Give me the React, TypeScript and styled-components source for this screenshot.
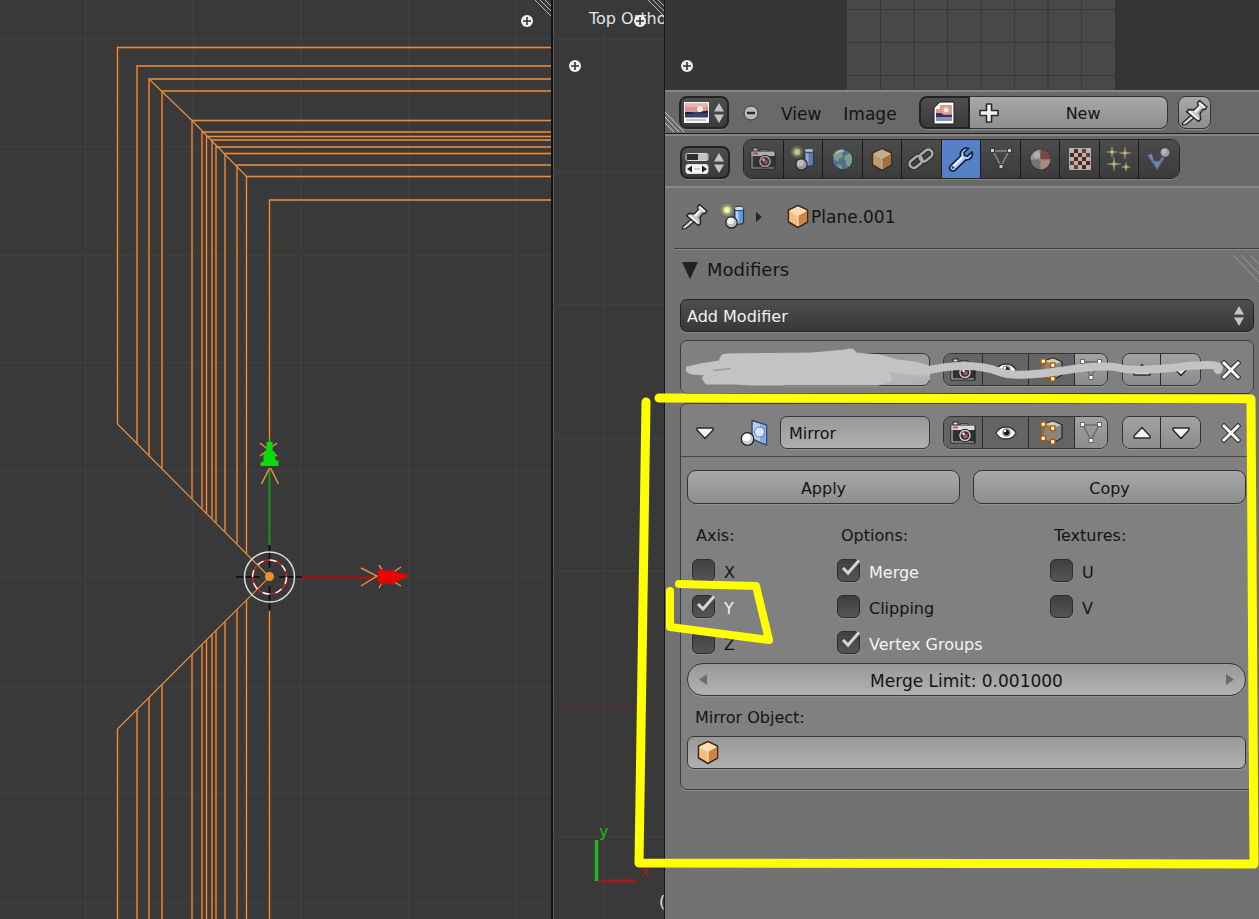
import React, { useId, useState } from 'react';
import styled, { createGlobalStyle, css } from 'styled-components';

const GlobalStyle = createGlobalStyle`
  *, *::before, *::after { box-sizing: border-box; }
  body {
    margin: 0;
    background: #727272;
    font-family: "DejaVu Sans", sans-serif;
    font-size: 16px;
    line-height: 20px;
    color: #141414;
    overflow-x: hidden;
  }
  button, input, select { font: inherit; color: inherit; margin: 0; }
  svg { display: block; flex: none; }
`;

/* ---------- layout ---------- */

const Workspace = styled.main`
  display: grid;
  grid-template-columns: minmax(0, 551fr) minmax(0, 113fr) minmax(0, 595fr);
  min-height: 100vh;
`;

const Viewport = styled.section<{ $divided?: boolean }>`
  position: relative;
  overflow: hidden;
  background: #393939;
  ${(p) => p.$divided && css`
    border-left: 2px solid #121212;
    box-shadow: inset 1px 0 #5a5a5a;
  `}
`;

const Canvas = styled.svg`
  position: absolute;
  inset: 0;
  width: 100%;
  height: 100%;
`;

const ViewName = styled.h2`
  margin: 0;
  padding: 9px 0 0 36px;
  font-size: 16px;
  font-weight: 400;
  color: #e4e4e4;
  white-space: nowrap;
`;

const Sidebar = styled.section`
  position: relative;
  display: flex;
  flex-direction: column;
  background: #727272;
  border-left: 1px solid #161616;
`;

const Annotations = styled.svg`
  position: absolute;
  top: 0;
  left: 0;
  width: 100%;
  height: 100%;
  overflow: visible;
  pointer-events: none;
`;

const ImageView = styled.div`
  position: relative;
  height: 90px;
  overflow: hidden;
  background: #353535;
`;

const Bar = styled.header<{ $tall?: boolean }>`
  position: relative;
  display: flex;
  align-items: ${(p) => (p.$tall ? 'flex-end' : 'center')};
  height: ${(p) => (p.$tall ? 54 : 44)}px;
  padding: ${(p) => (p.$tall ? '0 0 7px 15px' : '0 0 0 14px')};
  background: #696969;
  border-top: 2px solid #878787;
  border-bottom: ${(p) => (p.$tall ? '2px solid #8a8a8a' : '1px solid #1c1c1c')};
`;

const Menus = styled.nav`
  display: flex;
  align-items: center;
  gap: 22px;
  margin: 0 22px 0 14px;
`;

const MenuButton = styled.button`
  padding: 2px 0 0;
  border: 0;
  background: none;
  font-size: 17px;
`;

const DarkButton = styled.button<{ $join?: boolean }>`
  display: flex;
  align-items: center;
  justify-content: center;
  gap: 4px;
  width: ${(p) => (p.$join ? 51 : 50)}px;
  height: 33px;
  padding: 0;
  border: 2px solid #232323;
  border-radius: ${(p) => (p.$join ? '8px 0 0 8px' : '8px')};
  background: linear-gradient(#4e4e4e, #3a3a3a);
  box-shadow: 0 1px #848484;
`;

const PlainButton = styled.button`
  padding: 0;
  border: 0;
  background: none;
`;

const lightFace = css`
  border: 1px solid #333;
  background: linear-gradient(#a8a8a8, #8e8e8e);
  box-shadow: 0 1px #919191;
`;

const NewButton = styled.button`
  ${lightFace}
  display: flex;
  align-items: center;
  width: 198px;
  height: 33px;
  padding: 0 0 0 8px;
  border-left: 0;
  border-radius: 0 8px 8px 0;
  span { flex: 1; padding-top: 2px; }
`;

const PinButton = styled.button`
  ${lightFace}
  display: flex;
  align-items: center;
  justify-content: center;
  width: 33px;
  height: 33px;
  margin-left: 10px;
  padding: 0;
  border-radius: 8px;
`;

const Tabs = styled.div`
  display: grid;
  grid-template-columns: repeat(11, minmax(0, 1fr));
  width: 437px;
  height: 40px;
  margin-left: 13px;
  border: 1px solid #222;
  border-radius: 9px;
  overflow: hidden;
  box-shadow: 0 1px #848484;
`;

const Tab = styled.button<{ $active?: boolean }>`
  display: flex;
  align-items: center;
  justify-content: center;
  padding: 0;
  border: 0;
  border-right: 1px solid #1b1b1b;
  background: ${(p) => (p.$active ? '#5680c8' : 'linear-gradient(#4c4c4c, #3b3b3b)')};
  &:last-child { border-right: 0; }
  svg { opacity: ${(p) => (p.$active ? 1 : 0.7)}; }
`;

const Breadcrumbs = styled.div`
  display: flex;
  align-items: center;
  height: 60px;
  padding: 0 0 3px 16px;
  font-size: 17px;
`;

const Path = styled.div`
  display: flex;
  align-items: center;
  margin-left: 12px;
  gap: 10px;
`;

const ObjectName = styled.span`
  display: flex;
  align-items: center;
  gap: 2px;
  margin-left: 15px;
`;

const Panel = styled.section`
  position: relative;
  margin-left: 9px;
  padding: 10px 5px 0 6px;
  border-top: 1px solid #3e3e3e;
  box-shadow: inset 0 1px #8c8c8c;
`;

const PanelTitle = styled.h2`
  display: flex;
  align-items: center;
  gap: 9px;
  margin: 0 0 18px 2px;
  font-size: 18px;
  line-height: 22px;
  font-weight: 400;
`;

const Picker = styled.div`
  position: relative;
  margin-bottom: 8px;
`;

const PickerArrows = styled.span`
  position: absolute;
  right: 9px;
  top: 6px;
  pointer-events: none;
`;

const Select = styled.select`
  appearance: none;
  display: block;
  width: 100%;
  height: 33px;
  padding: 2px 30px 0 6px;
  border: 1px solid #222;
  border-radius: 7px;
  background: linear-gradient(#4e4e4e, #383838);
  box-shadow: 0 1px #8a8a8a;
  color: #f2f2f2;
`;

const Card = styled.article`
  margin-bottom: 9px;
  border: 1px solid #3c3c3c;
  border-radius: 7px;
  background: #808080;
  box-shadow: 0 1px #8e8e8e;
`;

const CardHeader = styled.div`
  display: flex;
  align-items: center;
  height: 52px;
  padding: 5px 12px 0 14px;
`;

const ToggleArrow = styled(PlainButton)`
  width: 20px;
  margin-right: 25px;
`;

const fieldFace = css`
  width: 100%;
  height: 33px;
  border: 1px solid #363636;
  border-radius: 7px;
  background: linear-gradient(#989898, #b0b0b0);
  box-shadow: 0 1px #929292;
`;

const NameInput = styled.input`
  ${fieldFace}
  flex: 1;
  min-width: 0;
  margin: 0 13px 0 12px;
  padding: 2px 8px 0;
`;

const Group = styled.div`
  display: flex;
  height: 33px;
  margin-right: 14px;
  border: 1px solid #333;
  border-radius: 8px;
  overflow: hidden;
  box-shadow: 0 1px #949494;
`;

const GroupButton = styled.button<{ $w: number; $on?: boolean }>`
  display: flex;
  align-items: center;
  justify-content: center;
  width: ${(p) => p.$w}px;
  padding: 0;
  border: 0;
  border-right: 1px solid #2b2b2b;
  background: ${(p) => (p.$on ? '#646464' : 'linear-gradient(#a2a2a2, #8c8c8c)')};
  &:last-child { border-right: 0; }
`;

const CloseButton = styled(PlainButton)`
  margin-left: 6px;
`;

const CardBody = styled.div`
  padding: 13px 7px 20px 6px;
  border-top: 1px solid #484848;
`;

const Actions = styled.div`
  display: grid;
  grid-template-columns: 1fr 1fr;
  gap: 13px;
  margin-bottom: 22px;
`;

const ActionButton = styled.button`
  ${lightFace}
  height: 34px;
  padding: 3px 0 0;
  border-radius: 9px;
`;

const Settings = styled.div`
  display: grid;
  grid-template-columns: 145fr 213fr 196fr;
  padding-left: 5px;
`;

const SettingGroup = styled.fieldset`
  display: flex;
  flex-direction: column;
  gap: 13px;
  min-width: 0;
  margin: 0 0 9px;
  padding: 0;
  border: 0;
`;

const Legend = styled.legend`
  margin-bottom: 13px;
  padding: 0 0 0 4px;
`;

const CheckLabel = styled.label<{ $on: boolean }>`
  position: relative;
  display: flex;
  align-items: center;
  gap: 9px;
  height: 23px;
  color: ${(p) => (p.$on ? '#f4f4f4' : '#141414')};
  span { padding-top: 4px; }
`;

const CheckBox = styled.input`
  appearance: none;
  width: 23px;
  height: 23px;
  border: 1px solid #2c2c2c;
  border-radius: 6px;
  background: linear-gradient(#3f3f3f, #555);
  box-shadow: 0 1px #909090;
`;

const Tick = styled.svg`
  position: absolute;
  left: 0;
  top: 0;
  pointer-events: none;
`;

const NumberField = styled.div`
  position: relative;
  margin-bottom: 12px;
`;

const NumberInput = styled.input`
  ${fieldFace}
  display: block;
  padding: 2px 24px 0;
  border-radius: 16px;
  background: linear-gradient(#999, #b2b2b2);
  font-size: 17px;
  text-align: center;
`;

const StepArrow = styled.svg<{ $side: 'left' | 'right' }>`
  position: absolute;
  top: 11px;
  ${(p) => p.$side}: 12px;
`;

const FieldLabel = styled.label`
  display: block;
  margin: 0 0 8px 8px;
`;

const ObjectField = styled.div`
  position: relative;
  & > svg { position: absolute; left: 10px; top: 4px; }
`;

const ObjectInput = styled.input`
  ${fieldFace}
  display: block;
  padding: 0 8px 0 38px;
`;

const Corner = styled.svg`
  position: absolute;
`;

const LeftCorner = styled(Corner)`
  left: 0;
  bottom: 0;
`;

const RightCorner = styled(Corner)`
  right: 0;
  top: 5px;
`;

/* ---------- icons ---------- */

const UpDown = () => (
  <svg width="12" height="22" viewBox="0 0 12 22">
    <path d="M6 1 11 9.500H1zM6 21 1 12.500h10z" fill="#c4c4c4" />
  </svg>
);

const PictureIcon = () => (
  <svg width="25" height="21" viewBox="0 0 25 21">
    <path d="M0 0h25v21H0z" fill="#f5f5f5" />
    <path d="M1 1.500h23V10H1z" fill="#d99a94" />
    <path d="M1 1.500h23V5H1z" fill="#e8b4aa" />
    <circle cx="16" cy="7" r="3" fill="#fff0e4" />
    <path d="M1 10h23v5.500H1z" fill="#3c3f66" />
    <path d="M1 10h6l4 2H1zM18 9.500l6-1V11h-8z" fill="#22223c" />
    <path d="M2 18h20" stroke="#999" strokeWidth="1" />
  </svg>
);

const PageIcon = () => (
  <svg width="22" height="24" viewBox="0 0 22 24">
    <path d="M7 1h14v22H1V7z" fill="#fff" stroke="#1a1a1a" />
    <path d="M7 4h12v9H3V8h4z" fill="#dc9b93" />
    <circle cx="13" cy="9" r="2.500" fill="#fbe5da" />
    <path d="M3 13h16v7H3z" fill="#8c8fc0" />
    <path d="M3 12h5l3 2h8v2H3z" fill="#33365c" />
    <path d="M1.500 7H7V1.500z" fill="#fff" />
  </svg>
);

const PropertiesIcon = () => (
  <svg width="24" height="22" viewBox="0 0 24 22">
    <rect x="1" y="1.500" width="22" height="7" rx="1.500" fill="#2e2e2e" stroke="#ddd" />
    <path d="M13 2h8.500a1 1 0 0 1 1 1v4a1 1 0 0 1-1 1H13z" fill="#c4c4c4" />
    <rect x="1" y="12.500" width="22" height="9" rx="2" fill="#f4f4f4" stroke="#ddd" />
    <path d="M2 17l5-3.500v7zM22 17l-5-3.500v7z" fill="#222" />
    <path d="M9 17h6" stroke="#aaa" strokeWidth="1" />
  </svg>
);

const MinusDisc = () => (
  <svg width="16" height="16" viewBox="0 0 16 16">
    <circle cx="8" cy="8" r="7" fill="#b9b9b9" stroke="#3c3c3c" />
    <path d="M4 8h8" stroke="#2a2a2a" strokeWidth="2.400" />
  </svg>
);

const PlusIcon = () => (
  <svg width="22" height="22" viewBox="0 0 22 22">
    <path d="M8.500 2h5v6.500H20v5h-6.500V20h-5v-6.500H2v-5h6.500z" fill="#f2f2f2" stroke="#2b2b2b" strokeWidth="1.600" strokeLinejoin="round" />
  </svg>
);

const PinIcon = () => (
  <svg width="27" height="27" viewBox="0 0 27 27">
    <path d="M11.500 15 1.500 24v2l3.500-.500 9-7.500z" fill="#d8d8d8" stroke="#222" strokeWidth="1.200" strokeLinejoin="round" />
    <path d="M18.500 1.500l7.500 6.500-2 2.500-2-.300-3 4.300.700 6-2.200 2L5.500 12.700l2.100-2.200 5.700.200 4-3.800-.900-3z" fill="#c6c6c6" stroke="#222" strokeWidth="1.400" strokeLinejoin="round" />
    <path d="M18.500 4l5 4.500M8.500 12.500l8.500 7.500" fill="none" stroke="#f2f2f2" strokeWidth="1.800" />
    <path d="M19 7.500l-5 5.500" stroke="#fff" strokeWidth="2" />
    <path d="M21 10l-4 5" stroke="#8b8b8b" strokeWidth="1.200" />
  </svg>
);

const SceneIcon = () => (
  <svg width="26" height="26" viewBox="0 0 26 26">
    <circle cx="7" cy="6" r="6" fill="#d8d860" opacity=".35" />
    <circle cx="7" cy="6" r="3.500" fill="#e6e68a" />
    <circle cx="7" cy="6" r="1.600" fill="#fffff0" />
    <path d="M14.500 5v13c0 3 9 3 9 0V5z" fill="#6c9ade" stroke="#26364e" strokeWidth="1.200" />
    <path d="M16 6v13l2.500.500V6z" fill="#b6d2f8" />
    <ellipse cx="19" cy="4.500" rx="4.500" ry="2.300" fill="#c6dbf6" stroke="#26364e" />
    <circle cx="11.500" cy="18.500" r="5.700" fill="#bdbdbd" stroke="#222" strokeWidth="1.200" />
    <circle cx="10.500" cy="17" r="3.300" fill="#f2f2f2" />
  </svg>
);

const CubeIcon = () => (
  <svg width="22" height="25" viewBox="0 0 22 25">
    <path d="M11 1.500 20.500 6v12L11 23.500 1.500 18V6z" fill="#e8ad6c" stroke="#3b2a1a" strokeWidth="1.500" strokeLinejoin="round" />
    <path d="M11 2.500 19.500 6.500 11 11 2.500 6.500z" fill="#fbdcae" />
    <path d="M2.500 7 11 11.300V22l-8.500-5z" fill="#f3be82" />
    <path d="M19.500 7 11 11.300V22l8.500-5z" fill="#cd8440" />
    <path d="M3 7l8 4.300L19 7M11 11.300V22" stroke="#ffedd0" fill="none" />
  </svg>
);

const CameraIcon = () => (
  <svg width="26" height="24" viewBox="0 0 26 24">
    <path d="M3 1h5v3H3zM10 3h8v3h-8z" fill="#ddd" stroke="#222" />
    <path d="M1 4.500h24V22H1z" fill="#303030" stroke="#181818" />
    <path d="M1.500 4.500h23V9h-23z" fill="#dcdcdc" />
    <path d="M3 5.500h5v2H3z" fill="#c35d55" />
    <path d="M2 4.500V21h22" stroke="#bdbdbd" fill="none" strokeWidth="1.200" />
    <circle cx="15" cy="14.500" r="6.300" fill="#c4c4c4" stroke="#222" />
    <circle cx="15" cy="14.500" r="4.300" fill="#4e2a2e" />
    <circle cx="15.500" cy="15" r="2.300" fill="#93646a" />
    <circle cx="13.500" cy="12.800" r="1.200" fill="#fff" />
  </svg>
);

const WorldIcon = () => (
  <svg width="23" height="23" viewBox="0 0 23 23">
    <circle cx="11.500" cy="11.500" r="10.300" fill="#4f83b4" stroke="#27323c" />
    <path d="M4 4c3-3 7-3.500 9-2l-2 4 1 3-4 2-1 3-4-3-1-4zM14 8l5-3 2 4 0 5-3 5-3-2 0-4-2-2zM6 16l4 1 2 4-4-1z" fill="#9fc0a6" />
    <path d="M5 6a8 8 0 0 1 8-3" stroke="#dbeaf4" fill="none" strokeWidth="1.500" />
  </svg>
);

const ChainIcon = () => (
  <svg width="26" height="22" viewBox="0 0 26 22">
    {[['#222', 5], ['#d4d4d4', 2.6]].map(([c, w]) => (
      <g key={c} fill="none" stroke={c} strokeWidth={w}>
        <rect x="1" y="10" width="14" height="8" rx="4" transform="rotate(-40 8 14)" />
        <rect x="11" y="3.500" width="14" height="8" rx="4" transform="rotate(-40 18 7.500)" />
      </g>
    ))}
  </svg>
);

const WrenchIcon = () => (
  <svg width="27" height="27" viewBox="0 0 27 27">
    <path
      d="M21.500 2.300 17 6.500l.500 3 3 .700 4.500-4.300c1.500 4-1.500 8.500-6.500 8.300L8 24.300c-3 2.500-7-1.300-4.500-4.500L13.500 10C12.500 5 17 .500 21.500 2.300z"
      fill="#aecbf4" stroke="#14233c" strokeWidth="1.700" strokeLinejoin="round"
    />
    <path d="M6 20.500 15.500 11" stroke="#f4f9ff" strokeWidth="2" />
    <circle cx="6" cy="21.500" r="1.200" fill="#27426e" />
  </svg>
);

const MeshIcon = ({ light }: { light?: boolean }) => (
  <svg width="24" height="24" viewBox="0 0 24 24">
    <path d="M4 4h16l-8 15z" fill="none" stroke={light ? '#6b6b6b' : '#a8a8a8'} strokeWidth="1.500" />
    {[[1.500, 1.500], [18.500, 1.500], [10, 17.500]].map(([x, y]) => (
      <rect key={x} x={x} y={y} width="4" height="4" fill="#fff" stroke={light ? '#666' : '#333'} />
    ))}
  </svg>
);

const MaterialIcon = () => (
  <svg width="23" height="23" viewBox="0 0 23 23">
    <circle cx="11.500" cy="11.500" r="10.300" fill="#8b8b8b" stroke="#2c2c2c" />
    <path d="M11.500 1.500a10 10 0 0 0-10 10h10z" fill="#bcbcbc" />
    <path d="M11.500 1.500a10 10 0 0 1 10 10h-10z" fill="#8c4a40" />
    <path d="M11.500 11.500h10a10 10 0 0 1-10 10z" fill="#d5a79a" />
    <circle cx="8" cy="7" r="3" fill="#e6e6e6" opacity=".8" />
  </svg>
);

const CheckerIcon = () => (
  <svg width="22" height="22" viewBox="0 0 22 22">
    <path d="M.500.500h21v21H.500z" fill="#f0e0da" stroke="#ddd" />
    {Array.from({ length: 25 }, (_, i) => i).filter((i) => i % 2 === 1).map((i) => (
      <rect key={i} x={1 + (i % 5) * 4} y={1 + Math.floor(i / 5) * 4} width="4" height="4" fill={i % 3 ? '#5b1c18' : '#7c3a34'} />
    ))}
  </svg>
);

const SparkIcon = () => (
  <svg width="26" height="26" viewBox="0 0 26 26">
    {[[6, 6, 5.500], [19, 7, 6], [8, 18, 7], [20, 21, 4.500]].map(([x, y, r]) => (
      <path
        key={x}
        d={`M${x} ${y - r}l1 ${r - 1} ${r - 1} 1 ${1 - r} 1-1 ${r - 1}-1 ${1 - r} ${1 - r}-1 ${r - 1}-1z`}
        fill="#f2e8b4" stroke="#a79a58" strokeWidth=".600"
      />
    ))}
  </svg>
);

const PhysicsIcon = () => (
  <svg width="24" height="24" viewBox="0 0 24 24">
    <path d="M2 8l8 12L17 9" fill="none" stroke="#6a94cf" strokeWidth="3" />
    <path d="M1 8l4-1 1 5M10 21l-2-7 5 1z" fill="#87aadd" />
    <circle cx="18" cy="5.500" r="5" fill="#c4c4c4" stroke="#333" />
    <circle cx="17" cy="4.500" r="2.500" fill="#eee" />
  </svg>
);

const MirrorIcon = () => (
  <svg width="28" height="28" viewBox="0 0 28 28">
    <path d="M12 1.500 26.500 6v20L12 20z" fill="#b8cff2" stroke="#2d4b7c" strokeWidth="1.500" />
    <path d="M20 5v17l5 2.500V7z" fill="#83a8e2" />
    <circle cx="19.500" cy="13" r="5" fill="#d9e6fa" stroke="#5c80ba" />
    <circle cx="7.500" cy="20" r="6.300" fill="#d0d0d0" stroke="#222" strokeWidth="1.300" />
    <circle cx="6.500" cy="18.500" r="3.800" fill="#fff" />
  </svg>
);

const EyeIcon = () => (
  <svg width="22" height="16" viewBox="0 0 22 16">
    <path d="M1 8c4-8 16-8 20 0-4 8-16 8-20 0z" fill="#fff" stroke="#333" strokeWidth="1.300" />
    <circle cx="11.500" cy="7.500" r="4.300" fill="#8a8a8a" />
    <circle cx="11.500" cy="7.500" r="2.600" fill="#151515" />
    <circle cx="10" cy="6" r="1.200" fill="#fff" />
  </svg>
);

const EditCubeIcon = () => (
  <svg width="26" height="25" viewBox="0 0 26 25">
    <path d="M5 4 14 1l9 4v13l-9 5-10-5z" fill="#868686" stroke="#2c2c2c" strokeWidth="1.300" />
    <path d="M6 4l8-2.500L22 5l-8 3z" fill="#d8c8b2" />
    <path d="M4 4.500 14 8v14M4 4.500V18l10 4" fill="none" stroke="#c47a1c" strokeWidth="1.600" />
    {[[2, 2], [11.500, 6], [2, 16], [11.500, 19.500]].map(([x, y]) => (
      <rect key={`${x}-${y}`} x={x} y={y} width="4.500" height="4.500" fill="#fff" stroke="#a85c08" strokeWidth="1.400" />
    ))}
  </svg>
);

const Arrow = ({ up }: { up?: boolean }) => (
  <svg width="20" height="14" viewBox="0 0 20 14">
    <path d={up ? 'M10 1.500 18 10v2H2v-2z' : 'M10 12.500 2 4V2h16v2z'} fill="#f3f3f3" stroke="#2a2a2a" strokeWidth="1.500" strokeLinejoin="round" />
  </svg>
);

const CloseIcon = () => (
  <svg width="20" height="20" viewBox="0 0 20 20">
    <path d="M3 3l14 14M17 3L3 17" stroke="#303030" strokeWidth="5" strokeLinecap="square" />
    <path d="M3 3l14 14M17 3L3 17" stroke="#f6f6f6" strokeWidth="3" strokeLinecap="square" />
  </svg>
);

const PlusDisc = ({ x, y }: { x: number; y: number }) => (
  <g>
    <circle cx={x} cy={y} r="6" fill="#eee" />
    <path d={`M${x - 4} ${y}h8M${x} ${y - 4}v8`} stroke="#333" strokeWidth="1.600" />
  </g>
);

const Grip = ({ x, y }: { x: number; y: number }) => (
  <g stroke="#b8b8b8" strokeWidth="1">
    <path d={`M${x - 16} ${y}l16 16M${x - 11} ${y}l11 11M${x - 6} ${y}l6 6`} />
  </g>
);

/* ---------- viewport drawings ---------- */

const loops: [number, number][] = [
  [117.5, 47.5], [137, 66], [149, 79], [162, 91], [192, 120.5], [202, 132], [206.5, 136.5],
  [212, 140], [216, 147], [225, 153.5], [237, 165], [246.5, 176.5],
];

const loopPath = loops
  .map(([x, y]) => `M551 ${y}H${x}V${306.5 + x}M${x} ${846.5 - x}V2000`)
  .join('') + 'M551 200H269.500V440M269.500 611V2000';

const FrontView = () => (
  <Canvas aria-label="Wireframe of the mirrored plane">
    <defs>
      <pattern id="fine" x="85" y="39" width="10.8" height="10.8" patternUnits="userSpaceOnUse">
        <path d="M0 .500h10.800M.500 0v10.800" stroke="#3b3b3b" />
      </pattern>
      <pattern id="coarse" x="85" y="38.500" width="107.8" height="107.8" patternUnits="userSpaceOnUse">
        <path d="M0 .500h108M.500 0v108" stroke="#414141" />
      </pattern>
    </defs>
    <rect width="100%" height="100%" fill="url(#fine)" />
    <rect width="100%" height="100%" fill="url(#coarse)" />
    <path d="M0 253.500H2000" stroke="#662222" />
    <g fill="none">
      <path d={loopPath} stroke="#6b3410" strokeWidth="2.600" />
      <path d={loopPath} stroke="#dc9250" strokeWidth="1.300" />
      <path d="M149 79l43 41.500L246.500 176.500M117.500 424 269.500 577 117.500 729" stroke="#e09048" strokeWidth="1.200" />
    </g>
    <path d="M269.500 470v75" stroke="#12a012" strokeWidth="1.800" />
    <path d="M260 443l17 13M277 443l-17 13M269.500 468l-8 16M270.500 468l8 16" stroke="#e2924c" strokeWidth="1.500" />
    <path d="M269.500 437l1 5h2v8l3 3v7l3 1v5h-18v-3l3-2v-7l3-4v-8h2z" fill="#08dc08" />
    <path d="M302 577.500h75" stroke="#b40808" strokeWidth="2" />
    <path d="M361 568l16 8-16 10M379 565l7 11-7 12M401 567l-15 10 15 9" fill="none" stroke="#e2924c" strokeWidth="1.400" />
    <path d="M407 577l-6 3-4 1-4 4-6-2-5 2-4-3v-12l4-1 5 2 5-1 6 3 9 1z" fill="#e60404" />
    <path d="M236 577h24M279 577h23M269.500 545v23M269.500 586v24" stroke="#0a0a0a" strokeWidth="1.600" />
    <g fill="none">
      <circle cx="269.500" cy="577" r="25" stroke="#dcdcdc" strokeWidth="1.500" />
      <circle cx="269.500" cy="577" r="17" stroke="#d02020" strokeWidth="1.500" />
      <circle cx="269.500" cy="577" r="17" stroke="#f4f4f4" strokeWidth="1.500" strokeDasharray="7 6.300" />
    </g>
    <circle cx="269.500" cy="576.500" r="4.500" fill="#f09020" />
    <PlusDisc x={527} y={21} />
    <Grip x={551} y={0} />
  </Canvas>
);

const TopView = () => (
  <Canvas aria-label="Top view axes">
    <defs>
      <pattern id="topGrid" x="-82" y="38.500" width="133" height="133" patternUnits="userSpaceOnUse">
        <path d="M0 .500h133M.500 0v133" stroke="#424242" />
      </pattern>
    </defs>
    <rect y="30" width="100%" height="100%" fill="url(#topGrid)" />
    <path d="M1 704H400" stroke="#662222" />
    <PlusDisc x={87} y={21} />
    <PlusDisc x={22} y={66} />
    <Grip x={111} y={0} />
    <path d="M43.500 840v41" stroke="#22b422" strokeWidth="3.500" />
    <path d="M45 881h39" stroke="#8e2020" strokeWidth="3.500" />
    <text x="46" y="837" fontSize="16" fill="#22b422">y</text>
    <text x="87" y="877" fontSize="16" fill="#8e2020">x</text>
    <text x="106" y="907" fontSize="16" fill="#e4e4e4">(</text>
  </Canvas>
);

const UvView = () => (
  <Canvas aria-label="Image grid">
    <rect x="182" width="268" height="90" fill="#484848" />
    <path
      d="M215.500 0v90M249 0v90M282.500 0v90M316 0v90M349.500 0v90M383 0v90M416.500 0v90M182 9.500h268M182 42.500h268M182 75.500h268"
      stroke="#373737"
    />
    <PlusDisc x={22} y={66} />
  </Canvas>
);

const GripLines = ({ dim }: { dim?: boolean }) => (
  <g fill="none" stroke={dim ? '#999' : '#ccc'}>
    <path d={dim ? 'M2 1l26 27M10 1l18 19M19 1l9 9' : 'M0 1l19 20M0 6l14 15M0 12l9 9'} />
  </g>
);

/* ---------- controls ---------- */

const Check = ({ label, checked = false }: { label: string; checked?: boolean }) => {
  const [on, setOn] = useState(checked);
  return (
    <CheckLabel $on={on}>
      <CheckBox type="checkbox" checked={on} onChange={() => setOn(!on)} />
      {on && (
        <Tick width="25" height="23" viewBox="0 0 25 23">
          <path d="M6 9l5 5L22 1.500" fill="none" stroke="#d6d6d6" strokeWidth="3" />
        </Tick>
      )}
      <span>{label}</span>
    </CheckLabel>
  );
};

const ModifierHeader = ({ name }: { name: string }) => (
  <CardHeader>
    <ToggleArrow aria-label="Collapse modifier"><Arrow /></ToggleArrow>
    <MirrorIcon />
    <NameInput aria-label="Modifier name" defaultValue={name} />
    <Group>
      <GroupButton $w={39} $on aria-label="Use in render"><CameraIcon /></GroupButton>
      <GroupButton $w={46} $on aria-label="Show in viewport"><EyeIcon /></GroupButton>
      <GroupButton $w={46} $on aria-label="Show in edit mode"><EditCubeIcon /></GroupButton>
      <GroupButton $w={32} aria-label="Adjust edit cage"><MeshIcon light /></GroupButton>
    </Group>
    <Group>
      <GroupButton $w={38} aria-label="Move up"><Arrow up /></GroupButton>
      <GroupButton $w={39} aria-label="Move down"><Arrow /></GroupButton>
    </Group>
    <CloseButton aria-label="Remove modifier"><CloseIcon /></CloseButton>
  </CardHeader>
);

const tabs: [string, React.FC][] = [
  ['Render', CameraIcon], ['Scene', SceneIcon], ['World', WorldIcon], ['Object', CubeIcon],
  ['Constraints', ChainIcon], ['Modifiers', WrenchIcon], ['Data', MeshIcon], ['Material', MaterialIcon],
  ['Texture', CheckerIcon], ['Particles', SparkIcon], ['Physics', PhysicsIcon],
];

const scribbleOutline =
  'M687 367 700 364 719 361 722 355 727 354 812 353 845 350Q854 347 856 353L880 355 897 360 915 362 929 366V375L914 375 887 371 892 377 890 382 878 385H750L735 384H706L702 378 705 375 692 374Q684 372 687 367Z';

export default function App() {
  const objectId = useId();
  return (
    <>
      <GlobalStyle />
      <Workspace>
        <Viewport><FrontView /></Viewport>
        <Viewport $divided>
          <ViewName>Top Ortho</ViewName>
          <TopView />
        </Viewport>
        <Sidebar>
          <ImageView><UvView /></ImageView>
          <Bar>
            <LeftCorner width="20" height="22"><GripLines /></LeftCorner>
            <DarkButton aria-label="Editor type: image"><PictureIcon /><UpDown /></DarkButton>
            <Menus>
              <PlainButton aria-label="Collapse menus"><MinusDisc /></PlainButton>
              <MenuButton>View</MenuButton>
              <MenuButton>Image</MenuButton>
            </Menus>
            <DarkButton $join aria-label="Browse image"><PageIcon /></DarkButton>
            <NewButton><PlusIcon /><span>New</span></NewButton>
            <PinButton aria-label="Pin image"><PinIcon /></PinButton>
          </Bar>
          <Bar $tall>
            <DarkButton aria-label="Editor type: properties"><PropertiesIcon /><UpDown /></DarkButton>
            <Tabs>
              {tabs.map(([name, Icon]) => (
                <Tab key={name} aria-label={name} $active={name === 'Modifiers'}><Icon /></Tab>
              ))}
            </Tabs>
          </Bar>
          <Breadcrumbs>
            <PlainButton aria-label="Pin data"><PinIcon /></PlainButton>
            <Path>
              <SceneIcon />
              <svg width="6" height="10" viewBox="0 0 6 10"><path d="M0 0l6 5-6 5z" fill="#262626" /></svg>
              <ObjectName><CubeIcon />Plane.001</ObjectName>
            </Path>
          </Breadcrumbs>
          <Panel>
            <RightCorner width="28" height="28"><GripLines dim /></RightCorner>
            <PanelTitle>
              <svg width="16" height="17" viewBox="0 0 16 17"><path d="M0 0h16L8 17z" fill="#222" /></svg>
              Modifiers
            </PanelTitle>
            <Picker>
              <Select aria-label="Add Modifier" defaultValue="add">
                <option value="add">Add Modifier</option>
              </Select>
              <PickerArrows><UpDown /></PickerArrows>
            </Picker>
            <Card><ModifierHeader name="" /></Card>
            <Card>
              <ModifierHeader name="Mirror" />
              <CardBody>
                <Actions>
                  <ActionButton>Apply</ActionButton>
                  <ActionButton>Copy</ActionButton>
                </Actions>
                <Settings>
                  <SettingGroup>
                    <Legend>Axis:</Legend>
                    <Check label="X" />
                    <Check label="Y" checked />
                    <Check label="Z" />
                  </SettingGroup>
                  <SettingGroup>
                    <Legend>Options:</Legend>
                    <Check label="Merge" checked />
                    <Check label="Clipping" />
                    <Check label="Vertex Groups" checked />
                  </SettingGroup>
                  <SettingGroup>
                    <Legend>Textures:</Legend>
                    <Check label="U" />
                    <Check label="V" />
                  </SettingGroup>
                </Settings>
                <NumberField>
                  <NumberInput aria-label="Merge Limit" defaultValue="Merge Limit: 0.001000" />
                  <StepArrow $side="left" width="8" height="11"><path d="M8 0v11L0 5.500z" fill="#6c6c6c" /></StepArrow>
                  <StepArrow $side="right" width="8" height="11"><path d="M0 0v11l8-5.500z" fill="#6c6c6c" /></StepArrow>
                </NumberField>
                <FieldLabel htmlFor={objectId}>Mirror Object:</FieldLabel>
                <ObjectField>
                  <ObjectInput id={objectId} />
                  <CubeIcon />
                </ObjectField>
              </CardBody>
            </Card>
          </Panel>
          <Annotations aria-hidden="true">
            <g transform="translate(-665 0)" fill="none" strokeLinecap="round" strokeLinejoin="round">
              <path d="M885 364 930 370V380Q905 386 885 382z" fill="#b4b4b4" />
              <path d={scribbleOutline} fill="#c3c3c3" stroke="#c3c3c3" strokeWidth="1" />
              <path d="M714 370.500l16-2" stroke="#9c9c9c" strokeWidth="1.500" />
              <path d="M925 371Q945 366 965 366T1000 372 1060 371 1120 368 1180 367 1218 370" stroke="#c3c3c3" strokeWidth="8" />
              <path d="M659 398 1251 399 1254 864 639 863 646 402" stroke="#ff0" strokeWidth="9" />
              <path d="M679 584 756 586 769 640 670 627V591" stroke="#ff0" strokeWidth="8" />
            </g>
          </Annotations>
        </Sidebar>
      </Workspace>
    </>
  );
}
